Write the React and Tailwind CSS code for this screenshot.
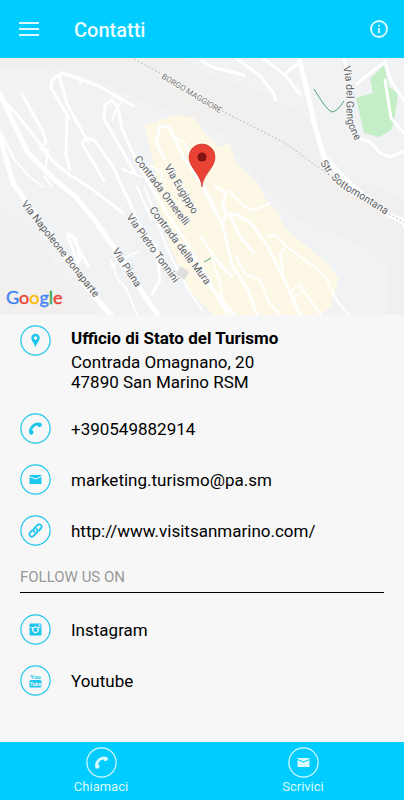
import React from "react";

function MapView() {
  return (
    <svg
      className="block w-full bg-[#f0f2f4]"
      viewBox="0 58 404 257"
      role="img"
      aria-label="Mappa di San Marino"
      fontFamily="Roboto, sans-serif"
    >
      <rect x="0" y="58" width="404" height="257" fill="#f0f2f4" />
      <g fill="#f1f0ef">
        <path d="M0 58H184L404 158V315H386L387 262L350 240L300 220L262 185L225 135L150 103L70 70L0 68Z" />
        <path d="M0 209L20 220L43 246L67 281L98 315H0Z" />
      </g>
      <path d="M184 58H404V200L380 189L338 174L322 156L304 100L202 74Z" fill="#f0f2f4" />
      <path
        d="M144 125L176 115L194 118L204 132L218 147L229 143L238 165L256 181L268 203L278 212L284 227L328 264L339 279L330 304L335 303L320 315H214L190 291L176 260L158 215L155 170Z"
        fill="#fdf8e5"
      />
      <path d="M370 79L384 65L389 87L398 93L394 122L391 130L379 137L364 133L356 98L373 93Z" fill="#c4eec6" />
      <g fill="none" stroke="#fff" strokeLinejoin="round" strokeLinecap="round">
        <g strokeWidth="5">
          <path d="M0 94L14 124L28 153L55 180L75 196L94 219L115 249L132 276L146 298L158 315" />
          <path d="M0 137L13 183L30 207L61 249L84 284L111 315" />
          <path d="M299 58L307 90L314 123L324 157L350 184L388 215L404 221" />
        </g>
        <g strokeWidth="3">
          <path d="M22 94L43 132L46 142L41 148L55 163L70 175L92 189L110 203L123 213" />
          <path d="M0 96L20 118L40 144L48 153" />
          <path d="M135 173L104 119L105 105L112 100L118 108L122 129L136 160L150 185L166 212L188 245L202 270L216 293L228 315" />
          <path d="M104 181L82 143L86 138L94 140L112 165L126 195L141 228L156 245L160 280L152 294" />
          <path d="M164 158L156 142L160 126L169 127L184 158L204 187L223 226L232 265L247 288L257 315" />
          <path d="M223 221L226 215L236 214L252 224L268 247L286 283L300 315" />
          <path d="M230 216L241 238L254 253" />
          <path d="M215 186L226 193L223 203L226 215" />
          <path d="M202 185L212 206L223 226" />
          <path d="M202 238L211 252L223 268L232 276" />
          <path d="M202 278L222 300L234 315" />
        </g>
        <g strokeWidth="2">
          <path d="M69 118L51 88L52 80L62 73L80 79L101 87L134 106L113 95" strokeWidth="3" />
          <path d="M59 75L67 104L88 142M67 118L66 155L70 170" strokeWidth="3" />
          <path d="M80 81L81 84M112 120L116 110L121 102" />
          <path d="M202 61L215 68L244 75M236 58L260 76L273 92L276 100" strokeWidth="3" />
          <path d="M263 58L286 76L300 94M284 75L297 64" strokeWidth="3" />
          <path d="M344 58L346 67M357 84L370 73L385 62L391 81L404 101" strokeWidth="3" />
          <path d="M385 80L391 118L404 133M359 138L370 142L380 153L390 157L404 151" strokeWidth="3" />
          <path d="M0 130L14 159L29 176L43 187M48 148L45 177L52 187" />
          <path d="M80 260L76 239L68 234L69 240L78 263M72 236L88 266" strokeWidth="3" />
          <path d="M111 267L122 259L139 251M111 260L117 278L127 290L137 315" />
          <path d="M145 187L163 238L174 263L191 294L202 310M137 187L152 220" />
          <path d="M268 237L275 235L287 247L318 270L326 278L337 301L349 315" />
          <path d="M286 246L280 254L283 274M290 291L300 285L321 315M293 298L304 291M289 291L299 315" />
          <path d="M236 256L245 274L260 280L269 303L281 315M212 258L219 280L222 298" />
          <path d="M228 190L245 207L255 210L270 203M404 226L400 221" />
          <path d="M175 137L184 142L202 181M122 169L142 177M151 166L162 173L160 187" />
        </g>
      </g>
      <path d="M181 266L189 272L184 280L176 274Z" fill="#dfdfdf" />
      <path d="M134 59L160 73M218 109L285 143L337 181M389 214L404 222" fill="none" stroke="#bbb" strokeWidth="1" strokeDasharray="2 2" />
      <path d="M314 89Q327 111 332 112Q337 112 344 101" fill="none" stroke="#50a775" strokeWidth="1" />
      <path d="M204 262L211 258" stroke="#50a775" strokeWidth="1" />
      <g fill="#5e6062" stroke="#f7f8f8" strokeWidth="2" paintOrder="stroke" fontSize="10.5">
        <text transform="translate(161 78) rotate(31)" fontSize="8" fill="#777">BORGO MAGGIORE</text>
        <text transform="translate(134 159) rotate(53)">Contrada Omerelli</text>
        <text transform="translate(164 167) rotate(59)">Via Eugippo</text>
        <text transform="translate(149 210) rotate(53)">Contrada delle Mura</text>
        <text transform="translate(126 217) rotate(54)">Via Pietro Tonnini</text>
        <text transform="translate(112 251) rotate(57)">Via Piana</text>
        <text transform="translate(21 204) rotate(52)">Via Napoleone Bonaparte</text>
        <path id="gengone" d="M343 67C350 91 343 115 350 130Q353 138 362 150" fill="none" stroke="none" />
        <text><textPath href="#gengone">Via del Gengone</textPath></text>
        <path id="sottomontana" d="M320 163Q334 186 354 195L396 221" fill="none" stroke="none" />
        <text><textPath href="#sottomontana">Str. Sottomontana</textPath></text>
      </g>
      <path d="M202 187C201 174 189 168 189 157A13 13 0 0 1 215 157C215 168 203 174 202 187Z" fill="#ea4335" stroke="#c8342b" strokeWidth=".7" />
      <circle cx="202" cy="157" r="4.6" fill="#811411" />
      <text x="6" y="304" fontSize="18" fontFamily="Lato, sans-serif" strokeWidth=".4">
        <tspan fill="#4285f4" stroke="#4285f4">G</tspan>
        <tspan fill="#ea4335" stroke="#ea4335">o</tspan>
        <tspan fill="#fbbc05" stroke="#fbbc05">o</tspan>
        <tspan fill="#4285f4" stroke="#4285f4">g</tspan>
        <tspan fill="#34a853" stroke="#34a853">l</tspan>
        <tspan fill="#ea4335" stroke="#ea4335">e</tspan>
      </text>
    </svg>
  );
}

const glyphs = {
  pin: (
    <path
      fillRule="evenodd"
      d="M15.500 22.500C15 19 11.300 16 11.300 13A4.200 4.200 0 0 1 19.700 13C19.700 16 16 19 15.500 22.500ZM15.500 11.300A1.700 1.700 0 1 0 15.500 14.700A1.700 1.700 0 1 0 15.500 11.300Z"
    />
  ),
  phone: (
    <path d="M9.300 20.300C8 16 12 9.500 18.500 9.500C20.500 9.500 22.300 10.700 22 12C21.700 13.500 20 14.300 18.800 14C17.800 13.700 18 12.400 17 12.500C14.500 12.800 12.500 15.200 12.300 17C12.200 18 13.400 17.800 13.500 19C13.600 20.500 12.300 21.700 11.200 21.700C10.200 21.700 9.600 21.200 9.300 20.300Z" />
  ),
  mail: (
    <>
      <path d="M9.500 11H21.500V12L15.500 14.500L9.500 12Z" />
      <path d="M9.500 13L15.500 15.600L21.500 13V20H9.500Z" />
    </>
  ),
  link: (
    <g fill="none" stroke="currentColor" strokeWidth="1.800" strokeLinecap="round" strokeLinejoin="round">
      <path d="M14.600 17.200C13.100 15.800 13.300 14.200 14.400 13.100L17.200 10.300C18.300 9.200 19.900 9.200 20.900 10.200C21.900 11.200 21.800 12.700 20.800 13.700L18.800 15.700" />
      <path d="M16.400 13.800C17.900 15.200 17.700 16.800 16.600 17.900L13.800 20.700C12.700 21.800 11.100 21.800 10.100 20.800C9.100 19.800 9.200 18.300 10.200 17.300L12.200 15.300" />
    </g>
  ),
  instagram: (
    <path
      fillRule="evenodd"
      d="M10.500 9.500H20.500Q21.500 9.500 21.500 10.500V20.500Q21.500 21.500 20.500 21.500H10.500Q9.500 21.500 9.500 20.500V10.500Q9.500 9.500 10.500 9.500ZM18.600 10.500V12.300H20.500V10.500ZM10.300 13.200V14H12.300A3.600 3.600 0 1 0 18.700 14H20.700V13.200H17.800A3.600 3.600 0 0 0 13.200 13.200ZM15.500 13.600A2.200 2.200 0 1 1 15.500 18A2.200 2.200 0 1 1 15.500 13.600Z"
    />
  ),
  youtube: (
    <g fontFamily="Roboto, sans-serif" fontWeight="700" textAnchor="middle">
      <text x="15.500" y="14" fontSize="6">You</text>
      <rect x="9.500" y="15" width="12" height="7.500" rx="1.500" />
      <text x="15.500" y="20.700" fontSize="5" fill="#f7f7f7">Tube</text>
    </g>
  ),
};

function RoundIcon({ name }) {
  return (
    <svg className="size-[31px] shrink-0" viewBox="0 0 31 31" fill="currentColor" aria-hidden="true">
      <circle cx="15.500" cy="15.500" r="14.600" fill="none" stroke="currentColor" strokeWidth="1.200" />
      {glyphs[name]}
    </svg>
  );
}

function Row({ icon, href, children }) {
  return (
    <a href={href} className="flex items-center gap-5">
      <span className="flex text-[#1cc6ec]">
        <RoundIcon name={icon} />
      </span>
      <span>{children}</span>
    </a>
  );
}

function Action({ icon, href, children }) {
  return (
    <a href={href} className="flex flex-1 flex-col items-center text-[13px] leading-[18px] text-[#d9fbff]">
      <RoundIcon name={icon} />
      {children}
    </a>
  );
}

export default function App() {
  return (
    <div className="flex min-h-screen flex-col bg-[#f7f7f7] font-[Roboto,sans-serif] text-black">
      <header className="flex h-[58px] items-center bg-[#00ccff] px-4 text-[#dcfbff]">
        <button type="button" aria-label="Menu" className="flex size-6">
          <svg className="size-6" viewBox="0 0 24 24" stroke="currentColor" strokeWidth="1.800" aria-hidden="true">
            <path d="M3 6H23M3 12H23M3 18H23" />
          </svg>
        </button>
        <h1 className="ml-[34px] flex-1 pt-0.5 text-xl font-medium leading-6 text-[#edfdff]">Contatti</h1>
        <button type="button" aria-label="Informazioni" className="flex size-[18px]">
          <svg className="size-[18px]" viewBox="0 0 18 18" fill="none" stroke="currentColor" strokeWidth="1.800" aria-hidden="true">
            <circle cx="9" cy="9" r="8" />
            <path d="M9 8V13M9 4.800V6.400" />
          </svg>
        </button>
      </header>

      <MapView />

      <main className="flex-1 px-5 pb-8 pt-[10px] text-[17px] leading-5">
        <div className="flex gap-5">
          <span className="flex text-[#1cc6ec]">
            <RoundIcon name="pin" />
          </span>
          <address className="pt-[3px] not-italic">
            <h2 className="mb-1 font-bold">Ufficio di Stato del Turismo</h2>
            Contrada Omagnano, 20
            <br />
            47890 San Marino RSM
          </address>
        </div>
        <div className="mt-[21px] flex flex-col gap-5">
          <Row icon="phone" href="tel:+390549882914">+390549882914</Row>
          <Row icon="mail" href="mailto:marketing.turismo@pa.sm">marketing.turismo@pa.sm</Row>
          <Row icon="link" href="http://www.visitsanmarino.com/">http://www.visitsanmarino.com/</Row>
        </div>
        <h2 className="mt-5 border-b border-black pb-1 text-[15px] leading-[22px] text-[#999]">FOLLOW US ON</h2>
        <div className="mt-[21px] flex flex-col gap-5">
          <Row icon="instagram" href="#instagram">Instagram</Row>
          <Row icon="youtube" href="#youtube">Youtube</Row>
        </div>
      </main>

      <footer className="flex bg-[#00ccff] pb-1 pt-[5px]">
        <Action icon="phone" href="tel:+390549882914">Chiamaci</Action>
        <Action icon="mail" href="mailto:marketing.turismo@pa.sm">Scrivici</Action>
      </footer>
    </div>
  );
}
